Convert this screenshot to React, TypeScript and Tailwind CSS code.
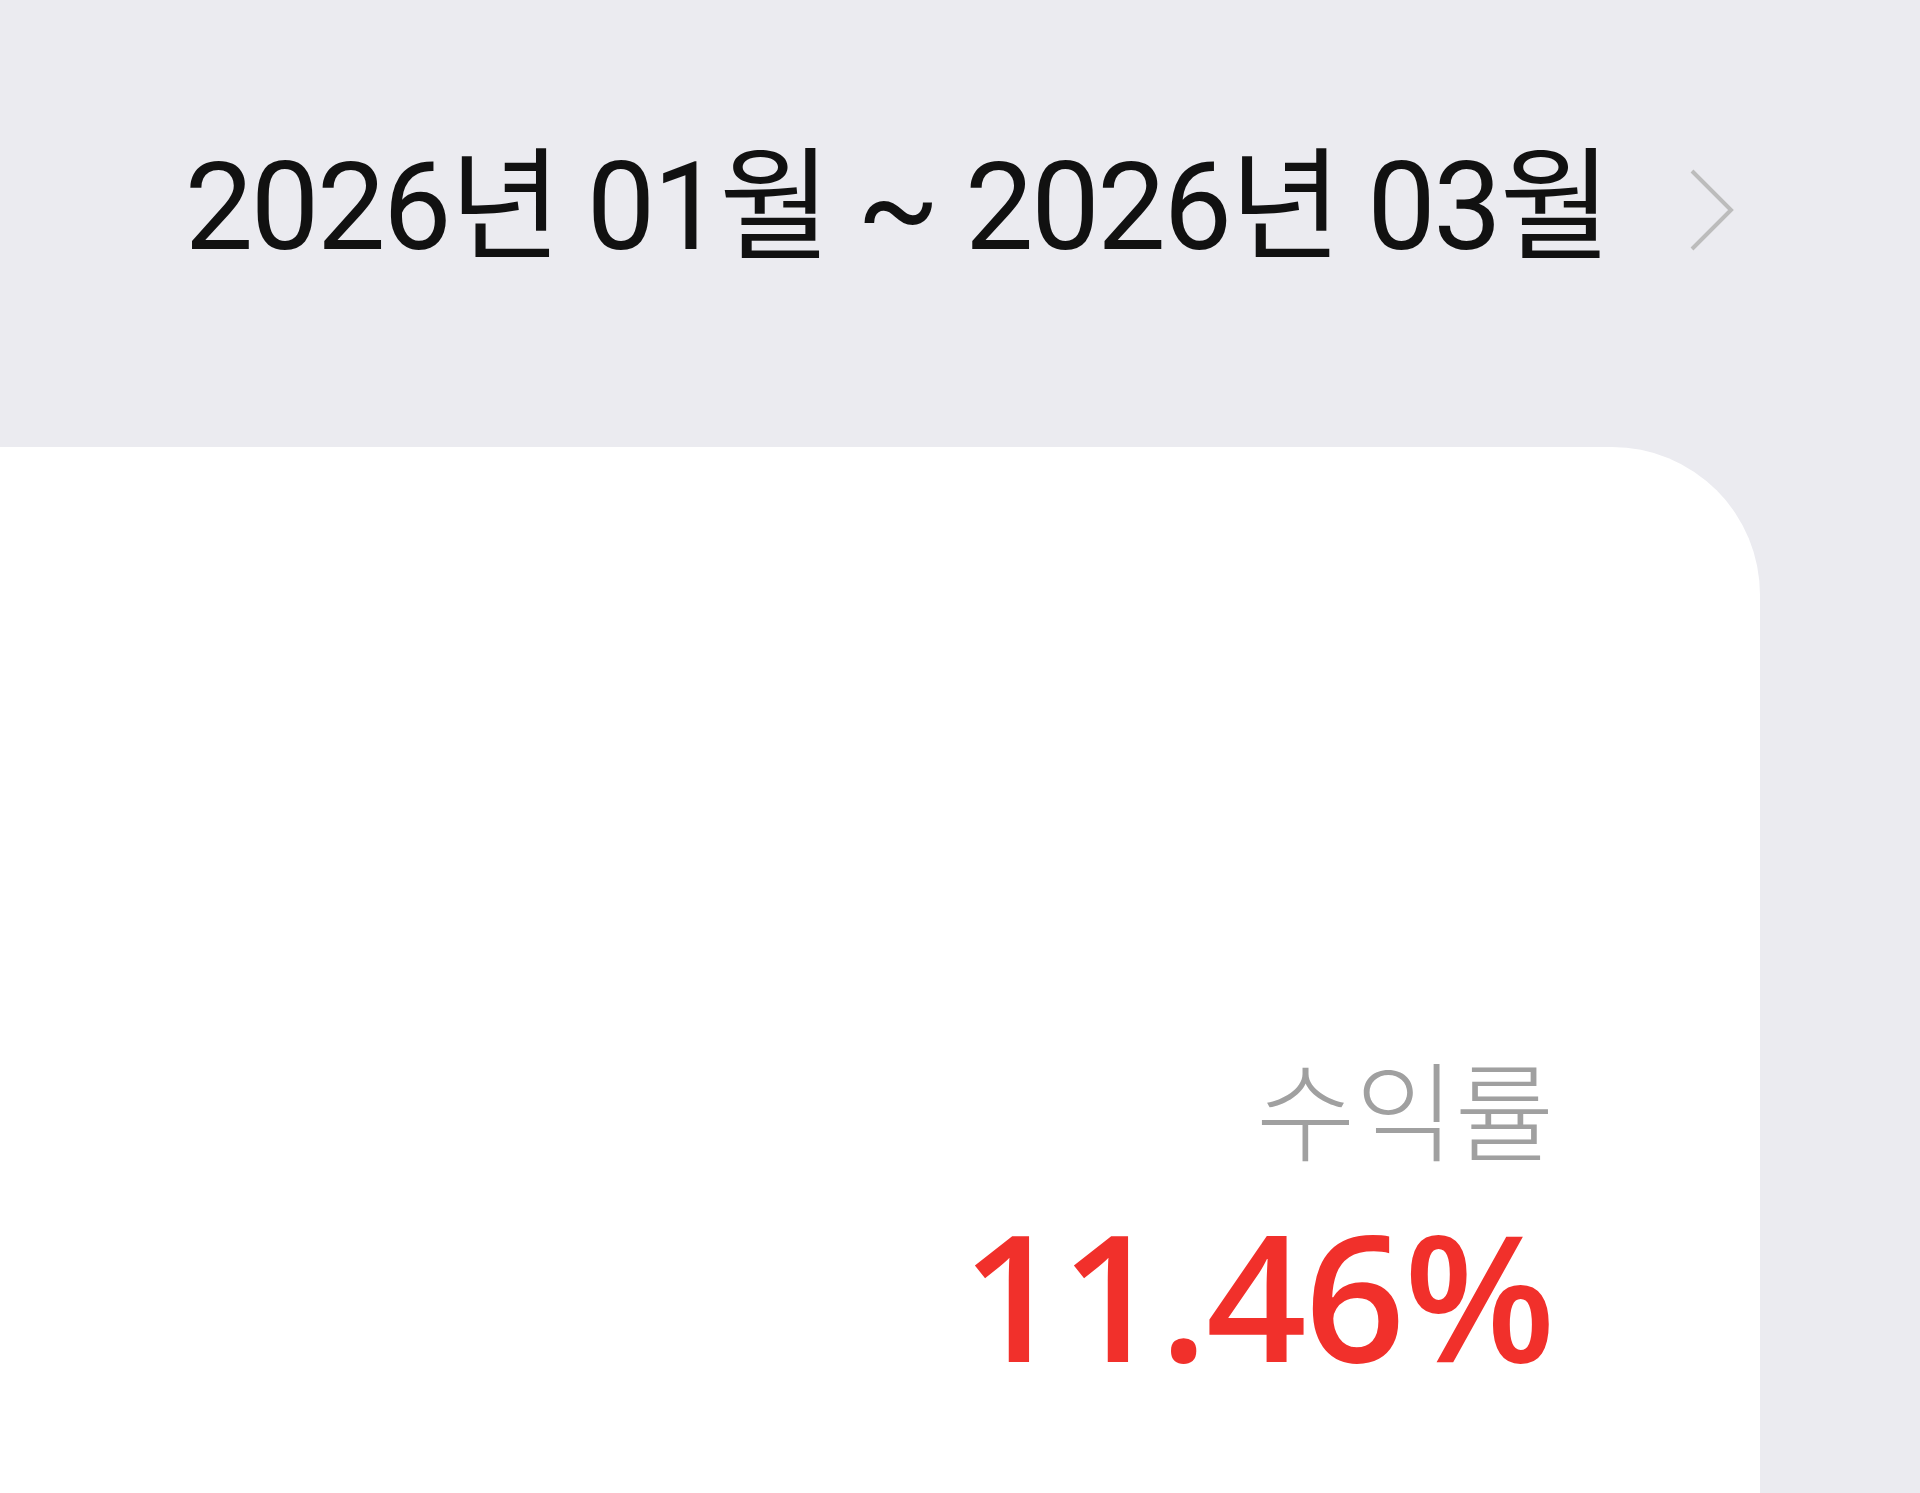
const App = () => {
  return (
    <div className="min-h-[1493px] bg-[#ebebf0] flex flex-col">
      <header className="h-[447px] flex items-start justify-center gap-[80px] pt-[147px]">
        <h1
          className="text-[122px] leading-none tracking-[-0.02em] text-[#111111]"
          style={{ fontFamily: "Roboto, 'Noto Sans CJK KR', sans-serif" }}
        >
          2026년 01월 ~ 2026년 03월
        </h1>
        <button className="mt-[22px]" aria-label="다음">
          <svg width="46" height="82" viewBox="0 0 46 82" fill="none">
            <polyline
              points="3,2 42,41 3,80"
              stroke="#bcbcbc"
              strokeWidth="4"
              strokeLinejoin="miter"
            />
          </svg>
        </button>
      </header>

      <main className="flex-1 mr-[160px] bg-white rounded-tr-[148px]">
        <div className="flex flex-col items-end pt-[605px] pr-[206px]">
          <p
            className="text-[108px] leading-none font-light text-[#a0a0a0]"
            style={{ fontFamily: "'Noto Sans CJK KR', sans-serif" }}
          >
            수익률
          </p>
          <p
            className="mt-[46px] text-[176px] leading-none font-semibold tracking-[-0.01em] text-[#f1302b]"
            style={{ fontFamily: "'Open Sans', 'Noto Sans', sans-serif" }}
          >
            11.46%
          </p>
        </div>
      </main>
    </div>
  );
};

export default App;
